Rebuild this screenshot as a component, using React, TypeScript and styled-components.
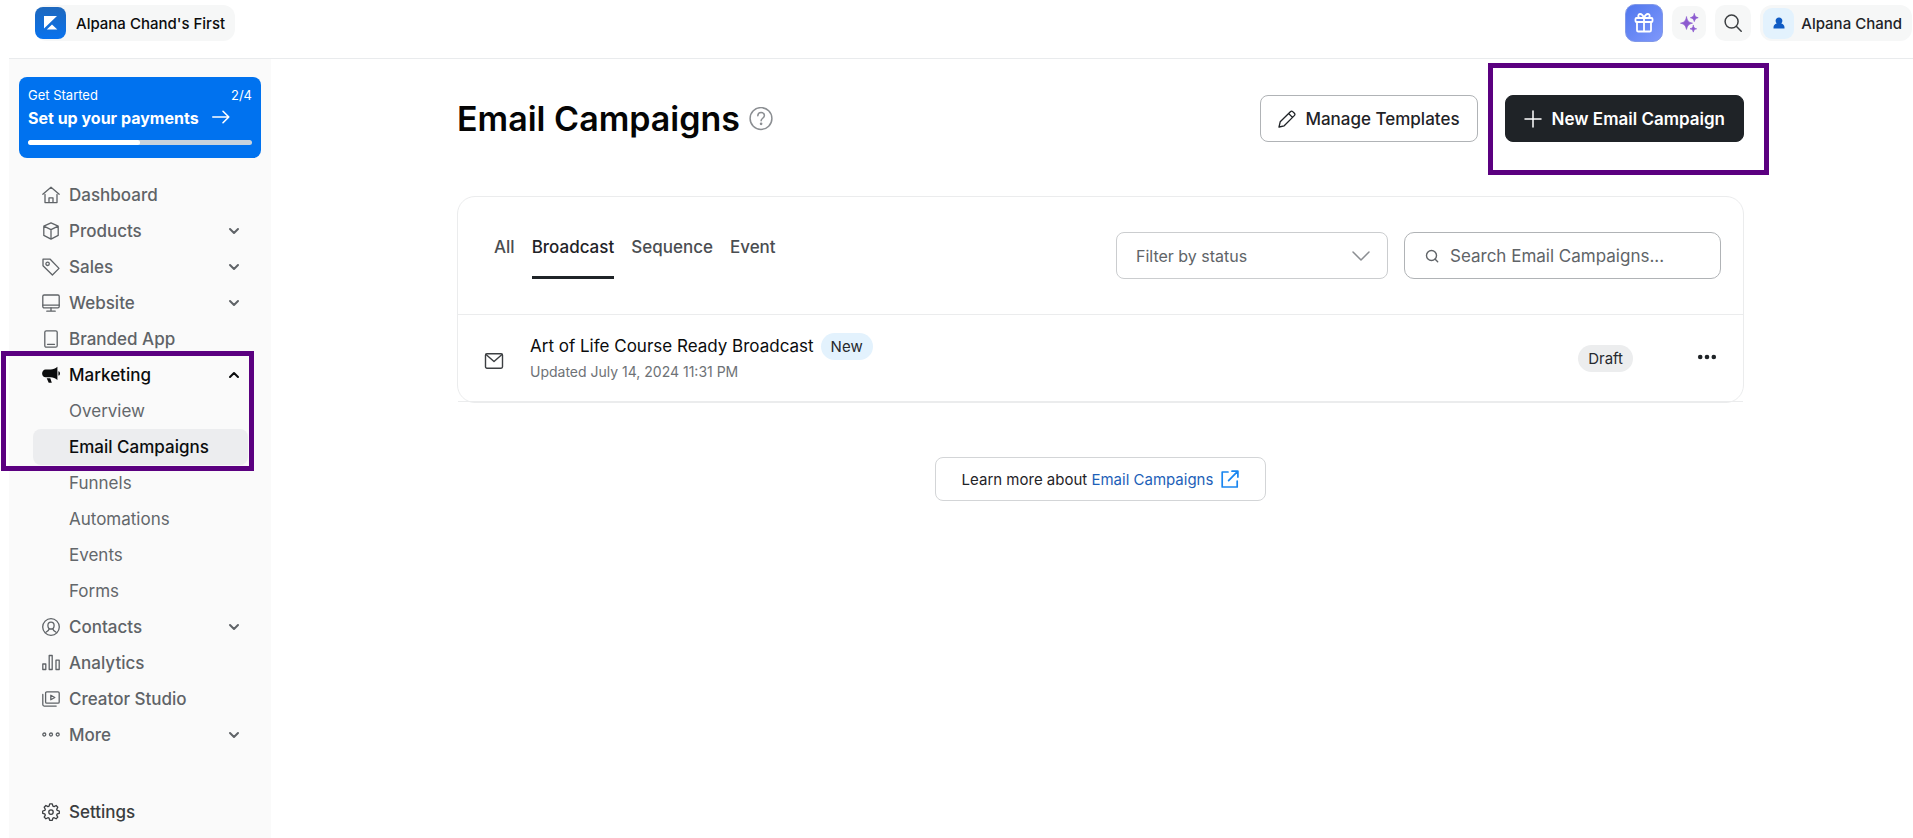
import React from 'react';
import styled, { createGlobalStyle, css } from 'styled-components';

const GlobalStyle = createGlobalStyle`
  *, *::before, *::after { box-sizing: border-box; }
  body {
    margin: 0;
    background: #fff;
    color: #1f2327;
    font-family: Inter, "Liberation Sans", sans-serif;
    font-size: 16px;
  }
  button, input, select { font: inherit; color: inherit; }
  button { cursor: pointer; }
  svg { display: block; flex: none; }
`;

const Page = styled.div`
  display: flex;
  flex-direction: column;
  min-height: 100vh;
  padding-left: 9px;
`;

const TopBar = styled.header`
  display: flex;
  justify-content: space-between;
  align-items: flex-start;
  height: 59px;
  padding: 5px 1px 0 26px;
  border-bottom: 1px solid #e9ebed;
`;

const Chip = styled.button<{ $gap: number; $inset: number }>`
  display: flex;
  align-items: center;
  gap: ${(p) => p.$gap}px;
  height: 36px;
  padding: 0 10px 0 ${(p) => p.$inset}px;
  border: 0;
  border-radius: 12px;
  background: #f6f7f7;
  font-size: 15px;
  font-weight: 500;
  white-space: nowrap;
`;

const StoreName = styled.span`
  color: #0b0c0d;
`;

const TopActions = styled.div`
  display: flex;
  align-items: center;
  gap: 9px;
  height: 36px;
`;

const SquareButton = styled.button<{ $size: number; $primary?: boolean }>`
  display: grid;
  place-items: center;
  width: ${(p) => p.$size}px;
  height: ${(p) => p.$size}px;
  padding: 0;
  border: 0;
  border-radius: 10px;
  background: #f6f7f7;
  ${(p) =>
    p.$primary &&
    css`
      border: 1px solid #8098e8;
      background: linear-gradient(135deg, #5077ee, #7f98fb);
    `}
`;

const Avatar = styled.span`
  display: grid;
  place-items: center;
  width: 31px;
  height: 31px;
  border-radius: 9px;
  background: #e3f2fd;
`;

const Body = styled.div`
  display: flex;
  flex: 1;
`;

const Sidebar = styled.aside`
  flex: none;
  width: 262px;
  padding: 18px 10px 8px;
  background: #fafafa;
`;

const SetupCard = styled.a`
  display: block;
  height: 81px;
  padding: 9px;
  border-radius: 8px;
  background: #0072ef;
  color: #fff;
  text-decoration: none;
`;

const SetupMeta = styled.div`
  display: flex;
  justify-content: space-between;
  font-size: 13px;
  line-height: 18px;
`;

const SetupTitle = styled.div`
  display: flex;
  align-items: center;
  gap: 13px;
  font-size: 16px;
  font-weight: 700;
  line-height: 28px;
`;

const Progress = styled.div`
  height: 5px;
  margin-top: 8px;
  border-radius: 3px;
  background: #c8d3dd;
  overflow: hidden;
`;

const ProgressFill = styled.div`
  height: 100%;
  border-radius: 3px;
  background: #fff;
`;

const Nav = styled.nav`
  display: flex;
  flex-direction: column;
  margin: 19px 13px 0 14px;
`;

const rowStyle = css`
  display: flex;
  align-items: center;
  gap: 9px;
  width: 100%;
  height: 36px;
  padding: 0 8px 0 9px;
  border: 0;
  border-radius: 8px;
  background: none;
  color: #5f6367;
  font-size: 17px;
  font-weight: 500;
  text-align: left;
  text-decoration: none;
`;

const NavLink = styled.a<{ $dark?: boolean }>`
  ${rowStyle}
  color: ${(p) => (p.$dark ? '#3a3d40' : '#5f6367')};
`;

const NavToggle = styled.button<{ $open?: boolean }>`
  ${rowStyle}
  color: ${(p) => (p.$open ? '#0b0c0d' : '#5f6367')};
`;

const NavLabel = styled.span`
  flex: 1;
`;

const SubLink = styled.a<{ $active?: boolean }>`
  ${rowStyle}
  padding-left: 36px;
  font-weight: ${(p) => (p.$active ? 500 : 400)};
  color: ${(p) => (p.$active ? '#0b0c0d' : '#63676b')};
  background: ${(p) => (p.$active ? '#ecedef' : 'none')};
`;

const NavBreak = styled.div`
  height: 41px;
`;

const Marked = styled.div`
  position: relative;
`;

const Marker = styled.span<{ $inset: string }>`
  position: absolute;
  inset: ${(p) => p.$inset};
  border: 5px solid #5b0080;
  pointer-events: none;
`;

const Main = styled.main`
  flex: 1;
  min-width: 0;
  padding: 36px 0 40px 17px;
`;

const Content = styled.div`
  width: 80%;
  max-width: 1287px;
  margin: 0 auto;
`;

const TitleRow = styled.div`
  display: flex;
  align-items: center;
  justify-content: space-between;
  margin-bottom: 54px;
`;

const TitleGroup = styled.div`
  display: flex;
  align-items: center;
  gap: 9px;
`;

const Title = styled.h1`
  margin: 0;
  color: #050505;
  font-size: 34px;
  font-weight: 600;
  line-height: 47px;
`;

const HelpButton = styled.button`
  padding: 0;
  border: 0;
  background: none;
  color: #8b8e92;
`;

const ActionGroup = styled.div`
  display: flex;
  gap: 27px;
`;

const ActionButton = styled.button<{ $primary?: boolean }>`
  display: flex;
  align-items: center;
  gap: ${(p) => (p.$primary ? 10 : 9)}px;
  height: 47px;
  padding: 0 ${(p) => (p.$primary ? 18 : 17)}px;
  border: 1px solid ${(p) => (p.$primary ? '#1f2327' : '#b0b3b6')};
  border-radius: 8px;
  background: ${(p) => (p.$primary ? '#1f2327' : '#fff')};
  color: ${(p) => (p.$primary ? '#fff' : '#1f2327')};
  font-weight: ${(p) => (p.$primary ? 600 : 500)};
  font-size: 17px;
  white-space: nowrap;
`;

const Panel = styled.section`
  border: 1px solid #ebeced;
  border-radius: 18px;
`;

const FilterBar = styled.div`
  display: flex;
  justify-content: space-between;
  align-items: flex-start;
  height: 118px;
  padding: 35px 22px 0 36px;
  border-bottom: 1px solid #ebeced;
`;

const Tabs = styled.div`
  display: flex;
  gap: 17px;
`;

const Tab = styled.button<{ $active?: boolean }>`
  height: 47px;
  padding: 0 0 14px;
  border: 0;
  border-bottom: 3px solid ${(p) => (p.$active ? '#1f2327' : 'transparent')};
  background: none;
  color: ${(p) => (p.$active ? '#1f2327' : '#4a4d51')};
  font-size: 17px;
  font-weight: 500;
`;

const Filters = styled.div`
  display: flex;
  gap: 16px;
`;

const SelectBox = styled.label`
  display: grid;
  align-items: center;
  width: 272px;

  & > * { grid-area: 1 / 1; }
  & > svg { justify-self: end; margin-right: 18px; pointer-events: none; }
`;

const Select = styled.select`
  width: 100%;
  height: 47px;
  padding: 0 44px 0 19px;
  appearance: none;
  border: 1px solid #cbcdcf;
  border-radius: 8px;
  background: #fff;
  color: #606468;
`;

const SearchBox = styled.label`
  display: flex;
  align-items: center;
  gap: 11px;
  width: 317px;
  height: 47px;
  padding: 0 20px;
  border: 1px solid #b0b3b6;
  border-radius: 10px;
  color: #606468;
  font-size: 17px;
`;

const SearchInput = styled.input`
  flex: 1;
  min-width: 0;
  padding: 0;
  border: 0;
  outline: 0;
  background: none;
  &::placeholder { color: #606468; opacity: 1; }
`;

const CampaignList = styled.ul`
  margin: 0;
  padding: 0;
  list-style: none;
`;

const CampaignRow = styled.li`
  display: flex;
  align-items: center;
  height: 87px;
  padding: 0 24px 0 26px;
  border-bottom: 1px solid #ebeced;
`;

const CampaignKind = styled.span`
  padding-top: 6px;
`;

const CampaignText = styled.div`
  flex: 1;
  margin-left: 26px;
`;

const CampaignTitle = styled.div`
  display: flex;
  align-items: center;
  gap: 7px;
  color: #0b0c0d;
  font-size: 17px;
`;

const CampaignMeta = styled.div`
  color: #6e7276;
  font-size: 14px;
  line-height: 24px;
`;

const Badge = styled.span<{ $tone: 'info' | 'neutral' }>`
  padding: 0 10px;
  border-radius: 14px;
  background: ${(p) => (p.$tone === 'info' ? '#e3f2fd' : '#ecedee')};
  color: #26292d;
  font-size: 15px;
  line-height: 27px;
`;

const MenuButton = styled.button`
  margin-left: 62px;
  padding: 2px;
  border: 0;
  background: none;
`;

const LearnMore = styled.p`
  display: flex;
  align-items: center;
  width: fit-content;
  height: 44px;
  margin: 54px auto 0;
  padding: 0 26px;
  border: 1px solid #d3d5d7;
  border-radius: 8px;
  font-size: 15px;
  white-space: pre;
`;

const LearnLink = styled.a`
  display: flex;
  align-items: center;
  gap: 8px;
  color: #1d5fb8;
  text-decoration: none;
`;

type IconProps = { children: React.ReactNode; size?: number; width?: number; color?: string };

const Icon = ({ children, size = 18, width = 1.3, color = 'currentColor' }: IconProps) => (
  <svg
    width={size}
    height={size}
    viewBox={`0 0 ${size} ${size}`}
    fill="none"
    stroke={color}
    strokeWidth={width}
    strokeLinecap="round"
    strokeLinejoin="round"
    aria-hidden="true"
  >
    {children}
  </svg>
);

const HomeIcon = () => (
  <Icon>
    <path d="M.8 8.2 9 1.2l8.200 7M3 8.400v8.200h12V8.400M7 16.500v-4.700h4v4.700" />
  </Icon>
);
const BoxIcon = () => (
  <Icon>
    <path d="M9 .9 16.200 4.200v9.200L9 17.100 1.800 13.400V4.200zM1.800 4.200 9 7.700l7.200-3.500M9 7.700v9.400" />
  </Icon>
);
const TagIcon = () => (
  <Icon>
    <path d="M1 1.200h7.200L17 10.400 10.400 17 1 7.800z" />
    <circle cx="5.600" cy="5.800" r="1.700" />
  </Icon>
);
const MonitorIcon = () => (
  <Icon>
    <rect x=".8" y="1" width="16.400" height="12.800" rx="1.300" />
    <path d="M.8 11.200h16.400M9 13.800v3.200M4.800 17.200h8.400" />
  </Icon>
);
const TabletIcon = () => (
  <Icon>
    <rect x="2.800" y=".8" width="12.400" height="16.400" rx="1.500" />
    <path d="M5.500 14.300h7" />
  </Icon>
);
const MegaphoneIcon = () => (
  <Icon width={0}>
    <path
      fill="currentColor"
      d="M15.400.8v13.200c-2.100-1.700-4.400-2.500-6.600-2.700H3.600C1.600 11.300.1 9.600.1 7.500s1.500-3.900 3.500-3.900h5.200c2.200-.2 4.500-1.100 6.600-2.800zM16.400 5.200c1 .3 1.600 1.100 1.600 2.200s-.6 1.900-1.600 2.200zM4.700 12.200h3.600l1.500 4.600H6.700z"
    />
  </Icon>
);
const ContactIcon = () => (
  <Icon>
    <circle cx="9" cy="9" r="8.300" />
    <path d="M9 4.200c2 0 3.100 1.300 3.100 3.200S10.900 11 9 11 5.900 9.300 5.900 7.400 7 4.200 9 4.200zM7.300 10.700c-.2 1.600-1 2.200-3.400 3.600M10.700 10.700c.2 1.600 1 2.200 3.400 3.600" />
  </Icon>
);
const ChartIcon = () => (
  <Icon>
    <path d="M.8 10h3v5.500h-3zM7.200 1.500h3v14h-3zM14 6.200h3.200v9.300H14z" />
  </Icon>
);
const StudioIcon = () => (
  <Icon>
    <rect x="3.600" y="1.800" width="13.600" height="11.400" rx="1.200" />
    <path d="M.8 4.400v10.200c0 .9.500 1.500 1.400 1.500h12M8.800 5.200v4.600l4-2.300z" />
  </Icon>
);
const MoreIcon = () => (
  <Icon>
    <circle cx="2.300" cy="8.500" r="1.500" />
    <circle cx="9" cy="8.500" r="1.500" />
    <circle cx="15.700" cy="8.500" r="1.500" />
  </Icon>
);
const GearIcon = () => (
  <Icon>
    <path d="M7.700.9h2.600l.6 2.200 1.200.5 2-1.100 1.700 1.700-1.100 2 .5 1.200 2.100.6v2.300l-2.100.6-.5 1.200 1.100 2-1.700 1.700-2-1.100-1.200.5-.6 2.100H7.700l-.6-2.100-1.200-.5-2 1.100-1.700-1.700 1.100-2-.5-1.200-2.100-.6V8l2.100-.6.5-1.200-1.100-2 1.700-1.700 2 1.100 1.200-.5z" />
    <circle cx="9" cy="9.100" r="2.200" />
  </Icon>
);
const Caret = ({ up }: { up?: boolean }) => (
  <Icon size={12} width={2}>
    <path d={up ? 'M2 8l4-4 4 4' : 'M2 4l4 4 4-4'} />
  </Icon>
);
const StoreLogo = () => (
  <svg width="31" height="32" viewBox="0 0 31 32" aria-hidden="true">
    <defs>
      <linearGradient id="logo" x1="0" y1="0" x2="0" y2="1">
        <stop offset="0" stopColor="#1e68bd" />
        <stop offset="1" stopColor="#0872ee" />
      </linearGradient>
    </defs>
    <rect width="31" height="32" rx="8" fill="url(#logo)" />
    <path d="M9 9h13l-13 12.500zM22.300 22.600H11.800l5.200-5.200z" fill="#fff" />
  </svg>
);
const GiftIcon = () => (
  <Icon size={20} width={1.8} color="#fff">
    <rect x="1.500" y="5" width="17" height="4" rx="1" />
    <path d="M3 9v8.200c0 .8.500 1.300 1.300 1.300h11.400c.8 0 1.300-.5 1.300-1.300V9M10 5v13.500M10 5C9 2.400 7.800 1 6.200 1 3.600 1 3.700 5 6.200 5zM10 5c1-2.600 2.200-4 3.800-4 2.600 0 2.500 4 0 4z" />
  </Icon>
);
const SparkleIcon = () => (
  <Icon size={20} width={0.7} color="#8d5bd0">
    <path
      fill="#8d5bd0"
      d="M7.500 4c1 4 2 5.300 6 6.200-4 .9-5 2.200-6 6.200-1-4-2-5.300-6-6.200 4-.9 5-2.200 6-6.200zM15.300.8c.7 2.600 1.300 3.200 3.900 3.900-2.600.7-3.200 1.300-3.900 3.900-.7-2.600-1.300-3.200-3.900-3.900 2.600-.7 3.200-1.300 3.900-3.900zM14.300 12.500c.5 2.200 1.100 2.800 3.300 3.300-2.200.5-2.800 1.100-3.300 3.300-.5-2.200-1.100-2.800-3.300-3.300 2.200-.5 2.800-1.100 3.300-3.300z"
    />
  </Icon>
);
const SearchIcon = () => (
  <Icon width={1.5} color="#3c3f42">
    <circle cx="7.600" cy="7.600" r="6.500" />
    <path d="m12.300 12.300 4.900 4.900" />
  </Icon>
);
const SmallSearchIcon = () => (
  <Icon size={14} width={1.4}>
    <circle cx="6.500" cy="6.500" r="5" />
    <path d="m10.200 10.200 2.500 2.500" />
  </Icon>
);
const PersonIcon = () => (
  <Icon size={12} width={0}>
    <path
      fill="#0f5bc4"
      d="M6 .6c2 0 3.400 1.300 3.400 3.200 0 1-.4 1.900-1.100 2.600 2 .5 3.200 1.900 3.200 4.100v.9H.5v-.9c0-2.200 1.200-3.600 3.200-4.100-.7-.7-1.100-1.600-1.100-2.600C2.600 1.900 4 .6 6 .6z"
    />
  </Icon>
);
const ArrowIcon = () => (
  <Icon width={1.600}>
    <path d="M.8 8h16M11 2.300 16.800 8 11 13.700" />
  </Icon>
);
const HelpIcon = () => (
  <Icon size={24} width={1.5}>
    <circle cx="12" cy="11.500" r="10.900" />
    <path d="M8.800 8.800c.1-2 1.400-3.200 3.300-3.200s3.300 1.200 3.300 3c0 2.600-3.300 2.700-3.300 5.200" />
    <circle cx="12.100" cy="16.800" r=".6" fill="currentColor" />
  </Icon>
);
const PencilIcon = () => (
  <Icon>
    <path d="m1 17 1.200-5.200L12.400 1.700c.8-.8 1.600-.8 2.300-.1l1.700 1.700c.7.700.7 1.500-.1 2.300L6.200 15.800zM10.600 3.500l3.900 3.900" />
  </Icon>
);
const PlusIcon = () => (
  <Icon width={1.5}>
    <path d="M9 1v16M1 9h16" />
  </Icon>
);
const SelectCaret = () => (
  <Icon width={1.5} color="#8b8e92">
    <path d="m1 5 8 8 8-8" />
  </Icon>
);
const MailIcon = () => (
  <Icon size={20} width={1.4} color="#3c3f42">
    <rect x="1.500" y="2.800" width="17" height="14.400" rx="1.400" />
    <path d="m2 3.400 8 7.200 8-7.200" />
  </Icon>
);
const DotsIcon = () => (
  <Icon size={20} width={0}>
    <g fill="#1f2327">
      <circle cx="3.200" cy="9" r="2.300" />
      <circle cx="10" cy="9" r="2.300" />
      <circle cx="16.800" cy="9" r="2.300" />
    </g>
  </Icon>
);
const ExternalIcon = () => (
  <Icon width={1.7} color="#1a86f0">
    <path d="M7 2H1.200v15h15v-6M7.600 10.600 16.600 1.400M11 1.200h5.900v5.900" />
  </Icon>
);

const topItems = [
  { label: 'Products', icon: <BoxIcon /> },
  { label: 'Sales', icon: <TagIcon /> },
  { label: 'Website', icon: <MonitorIcon /> },
];
const laterSubItems = ['Funnels', 'Automations', 'Events', 'Forms'];
const tabs = ['All', 'Broadcast', 'Sequence', 'Event'];

const Toggle = ({ label, icon, open }: { label: string; icon: React.ReactNode; open?: boolean }) => (
  <NavToggle type="button" $open={open} aria-expanded={!!open}>
    {icon}
    <NavLabel>{label}</NavLabel>
    <Caret up={open} />
  </NavToggle>
);

export default function App() {
  const completed = 2;
  const steps = 4;

  return (
    <Page>
      <GlobalStyle />
      <TopBar>
        <Chip type="button" $gap={10} $inset={0}>
          <StoreLogo />
          <StoreName>Alpana Chand's First</StoreName>
        </Chip>
        <TopActions>
          <SquareButton type="button" $size={38} $primary aria-label="Rewards">
            <GiftIcon />
          </SquareButton>
          <SquareButton type="button" $size={34} aria-label="Assistant">
            <SparkleIcon />
          </SquareButton>
          <SquareButton type="button" $size={36} aria-label="Search">
            <SearchIcon />
          </SquareButton>
          <Chip type="button" $gap={7} $inset={3}>
            <Avatar>
              <PersonIcon />
            </Avatar>
            Alpana Chand
          </Chip>
        </TopActions>
      </TopBar>

      <Body>
        <Sidebar>
          <SetupCard href="#setup">
            <SetupMeta>
              <span>Get Started</span>
              <span>{completed}/{steps}</span>
            </SetupMeta>
            <SetupTitle>
              Set up your payments
              <ArrowIcon />
            </SetupTitle>
            <Progress>
              <ProgressFill style={{ width: `${(completed / steps) * 100}%` }} />
            </Progress>
          </SetupCard>

          <Nav aria-label="Main">
            <NavLink href="#dashboard">
              <HomeIcon />
              <NavLabel>Dashboard</NavLabel>
            </NavLink>
            {topItems.map((item) => (
              <Toggle key={item.label} {...item} />
            ))}
            <NavLink href="#app">
              <TabletIcon />
              <NavLabel>Branded App</NavLabel>
            </NavLink>
            <Marked>
              <Toggle label="Marketing" icon={<MegaphoneIcon />} open />
              <SubLink href="#overview">Overview</SubLink>
              <SubLink href="#email" $active aria-current="page">
                Email Campaigns
              </SubLink>
              <Marker $inset="-6px -6px -6px -32px" />
            </Marked>
            {laterSubItems.map((label) => (
              <SubLink key={label} href={`#${label.toLowerCase()}`}>
                {label}
              </SubLink>
            ))}
            <Toggle label="Contacts" icon={<ContactIcon />} />
            <NavLink href="#analytics">
              <ChartIcon />
              <NavLabel>Analytics</NavLabel>
            </NavLink>
            <NavLink href="#studio">
              <StudioIcon />
              <NavLabel>Creator Studio</NavLabel>
            </NavLink>
            <Toggle label="More" icon={<MoreIcon />} />
            <NavBreak />
            <NavLink href="#settings" $dark>
              <GearIcon />
              <NavLabel>Settings</NavLabel>
            </NavLink>
          </Nav>
        </Sidebar>

        <Main>
          <Content>
            <TitleRow>
              <TitleGroup>
                <Title>Email Campaigns</Title>
                <HelpButton type="button" aria-label="Help">
                  <HelpIcon />
                </HelpButton>
              </TitleGroup>
              <ActionGroup>
                <ActionButton type="button">
                  <PencilIcon />
                  Manage Templates
                </ActionButton>
                <Marked>
                  <ActionButton type="button" $primary>
                    <PlusIcon />
                    New Email Campaign
                  </ActionButton>
                  <Marker $inset="-32px -25px -33px -17px" />
                </Marked>
              </ActionGroup>
            </TitleRow>

            <Panel>
              <FilterBar>
                <Tabs role="tablist">
                  {tabs.map((tab) => (
                    <Tab
                      key={tab}
                      type="button"
                      role="tab"
                      aria-selected={tab === 'Broadcast'}
                      $active={tab === 'Broadcast'}
                    >
                      {tab}
                    </Tab>
                  ))}
                </Tabs>
                <Filters>
                  <SelectBox>
                    <Select aria-label="Filter by status" defaultValue="">
                      <option value="">Filter by status</option>
                      <option value="draft">Draft</option>
                      <option value="sent">Sent</option>
                    </Select>
                    <SelectCaret />
                  </SelectBox>
                  <SearchBox>
                    <SmallSearchIcon />
                    <SearchInput
                      type="search"
                      aria-label="Search Email Campaigns"
                      placeholder="Search Email Campaigns..."
                    />
                  </SearchBox>
                </Filters>
              </FilterBar>
              <CampaignList>
                <CampaignRow>
                  <CampaignKind>
                    <MailIcon />
                  </CampaignKind>
                  <CampaignText>
                    <CampaignTitle>
                      Art of Life Course Ready Broadcast
                      <Badge $tone="info">New</Badge>
                    </CampaignTitle>
                    <CampaignMeta>Updated July 14, 2024 11:31 PM</CampaignMeta>
                  </CampaignText>
                  <Badge $tone="neutral">Draft</Badge>
                  <MenuButton type="button" aria-label="Campaign actions">
                    <DotsIcon />
                  </MenuButton>
                </CampaignRow>
              </CampaignList>
            </Panel>

            <LearnMore>
              {'Learn more about '}
              <LearnLink href="#learn">
                Email Campaigns
                <ExternalIcon />
              </LearnLink>
            </LearnMore>
          </Content>
        </Main>
      </Body>
    </Page>
  );
}
